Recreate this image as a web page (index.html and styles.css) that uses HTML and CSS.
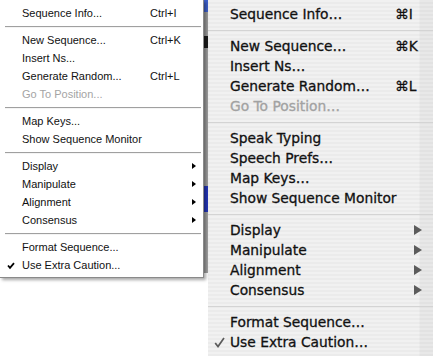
FILE: index.html
```html
<!DOCTYPE html>
<html lang="en">
<head>
  <meta charset="UTF-8">
  <title>Sequence menu</title>
  <link rel="stylesheet" href="styles.css">
</head>
<body>

<div class="screen">
  <div class="win-menu">
    <div class="win-item"><span class="win-mark"></span><span class="win-label">Sequence Info...</span><span class="win-key">Ctrl+I</span></div>
    <div class="win-sep"></div>
    <div class="win-item"><span class="win-mark"></span><span class="win-label">New Sequence...</span><span class="win-key">Ctrl+K</span></div>
    <div class="win-item"><span class="win-mark"></span><span class="win-label">Insert Ns...</span></div>
    <div class="win-item"><span class="win-mark"></span><span class="win-label">Generate Random...</span><span class="win-key">Ctrl+L</span></div>
    <div class="win-item disabled"><span class="win-mark"></span><span class="win-label">Go To Position...</span></div>
    <div class="win-sep"></div>
    <div class="win-item"><span class="win-mark"></span><span class="win-label">Map Keys...</span></div>
    <div class="win-item"><span class="win-mark"></span><span class="win-label">Show Sequence Monitor</span></div>
    <div class="win-sep"></div>
    <div class="win-item"><span class="win-mark"></span><span class="win-label">Display</span><span class="win-arrow"></span></div>
    <div class="win-item"><span class="win-mark"></span><span class="win-label">Manipulate</span><span class="win-arrow"></span></div>
    <div class="win-item"><span class="win-mark"></span><span class="win-label">Alignment</span><span class="win-arrow"></span></div>
    <div class="win-item"><span class="win-mark"></span><span class="win-label">Consensus</span><span class="win-arrow"></span></div>
    <div class="win-sep"></div>
    <div class="win-item"><span class="win-mark"></span><span class="win-label">Format Sequence...</span></div>
    <div class="win-item">
      <span class="win-mark">
        <svg width="8" height="8" viewBox="0 0 8 8"><path d="M1 3.5 L3 5.8 L7 1.2" fill="none" stroke="#000" stroke-width="1.8"/></svg>
      </span>
      <span class="win-label">Use Extra Caution...</span>
    </div>
  </div>

  <div class="backdrop"></div>

  <div class="mac-menu">
    <div class="mac-item"><span class="mac-mark"></span><span class="mac-label">Sequence Info…</span><span class="mac-key">⌘I</span></div>
    <div class="mac-sep"></div>
    <div class="mac-item"><span class="mac-mark"></span><span class="mac-label">New Sequence…</span><span class="mac-key">⌘K</span></div>
    <div class="mac-item"><span class="mac-mark"></span><span class="mac-label">Insert Ns…</span></div>
    <div class="mac-item"><span class="mac-mark"></span><span class="mac-label">Generate Random…</span><span class="mac-key">⌘L</span></div>
    <div class="mac-item disabled"><span class="mac-mark"></span><span class="mac-label">Go To Position…</span></div>
    <div class="mac-sep"></div>
    <div class="mac-item"><span class="mac-mark"></span><span class="mac-label">Speak Typing</span></div>
    <div class="mac-item"><span class="mac-mark"></span><span class="mac-label">Speech Prefs…</span></div>
    <div class="mac-item"><span class="mac-mark"></span><span class="mac-label">Map Keys…</span></div>
    <div class="mac-item"><span class="mac-mark"></span><span class="mac-label">Show Sequence Monitor</span></div>
    <div class="mac-sep"></div>
    <div class="mac-item"><span class="mac-mark"></span><span class="mac-label">Display</span><span class="mac-arrow"></span></div>
    <div class="mac-item"><span class="mac-mark"></span><span class="mac-label">Manipulate</span><span class="mac-arrow"></span></div>
    <div class="mac-item"><span class="mac-mark"></span><span class="mac-label">Alignment</span><span class="mac-arrow"></span></div>
    <div class="mac-item"><span class="mac-mark"></span><span class="mac-label">Consensus</span><span class="mac-arrow"></span></div>
    <div class="mac-sep"></div>
    <div class="mac-item"><span class="mac-mark"></span><span class="mac-label">Format Sequence…</span></div>
    <div class="mac-item">
      <span class="mac-mark">
        <svg width="11" height="11" viewBox="0 0 11 11"><path d="M1.2 6 L4 9.5 L10 1" fill="none" stroke="#5a5a5a" stroke-width="1.7"/></svg>
      </span>
      <span class="mac-label">Use Extra Caution…</span>
    </div>
  </div>
</div>

</body>
</html>
```

FILE: styles.css
```css
body { margin: 0; background: #fff; }
.screen {
  display: flex;
  align-items: flex-start;
  width: 433px;
  height: 356px;
  overflow: hidden;
  background: #fff;
}

/* windows style menu */
.win-menu {
  position: relative;
  z-index: 1;
  flex: none;
  width: 203px;
  padding: 4px 0 3px;
  background: #fff;
  border-right: 1px solid #8a8a8a;
  border-bottom: 1px solid #8a8a8a;
  box-shadow: 2px 2px 3px rgba(0,0,0,0.35);
  font-family: "Liberation Sans", Arial, sans-serif;
  font-size: 11px;
  color: #111;
}
.win-item {
  display: flex;
  align-items: center;
  height: 18px;
}
.win-item.disabled { color: #a4a4a4; }
.win-mark {
  width: 22px;
  display: flex;
  justify-content: center;
}
.win-mark svg { margin-top: 2px; }
.win-label { flex: 1; }
.win-key { width: 53px; }
.win-arrow {
  width: 0;
  height: 0;
  margin-right: 7px;
  border-left: 4px solid #000;
  border-top: 3.5px solid transparent;
  border-bottom: 3.5px solid transparent;
}
.win-sep {
  height: 1px;
  margin: 4px 2px 3px 5px;
  background: #a0a0a0;
  border-bottom: 1px solid #f4f4f4;
}

/* app window showing between the menus */
.backdrop {
  flex: none;
  width: 4px;
  height: 273px;
  background: linear-gradient(to bottom,
    #3d5fc9 0, #3d5fc9 12px, #9a9a9a 12px, #9a9a9a 36px,
    #1a1a1a 36px, #1a1a1a 48px, #9d9d9d 48px, #9d9d9d 186px,
    #2436b8 186px, #2436b8 212px, #a0a0a0 212px);
}

/* mac os x style menu */
.mac-menu {
  flex: 1;
  height: 356px;
  padding-top: 4px;
  box-sizing: border-box;
  background:
    linear-gradient(to right, rgba(0,0,0,0) 0, rgba(0,0,0,0) 211px, rgba(0,0,0,0.04) 212px),
    repeating-linear-gradient(to bottom, #f1f1f1 0, #f1f1f1 2px, #ebebeb 2px, #ebebeb 4px);
  font-family: "DejaVu Sans", sans-serif;
  font-size: 13.8px;
  color: #111;
  -webkit-text-stroke: 0.3px currentColor;
}
.mac-item {
  display: flex;
  align-items: center;
  height: 20px;
}
.mac-item.disabled { color: #a2a2a2; }
.mac-mark {
  width: 22px;
  display: flex;
  justify-content: center;
}
.mac-label { flex: 1; }
.mac-key { width: 38px; }
.mac-arrow {
  width: 0;
  height: 0;
  margin-right: 11px;
  border-left: 8px solid #5c5c5c;
  border-top: 5px solid transparent;
  border-bottom: 5px solid transparent;
}
.mac-sep {
  height: 1px;
  margin: 6px 0 5px;
  background: #d4d4d4;
}
```
